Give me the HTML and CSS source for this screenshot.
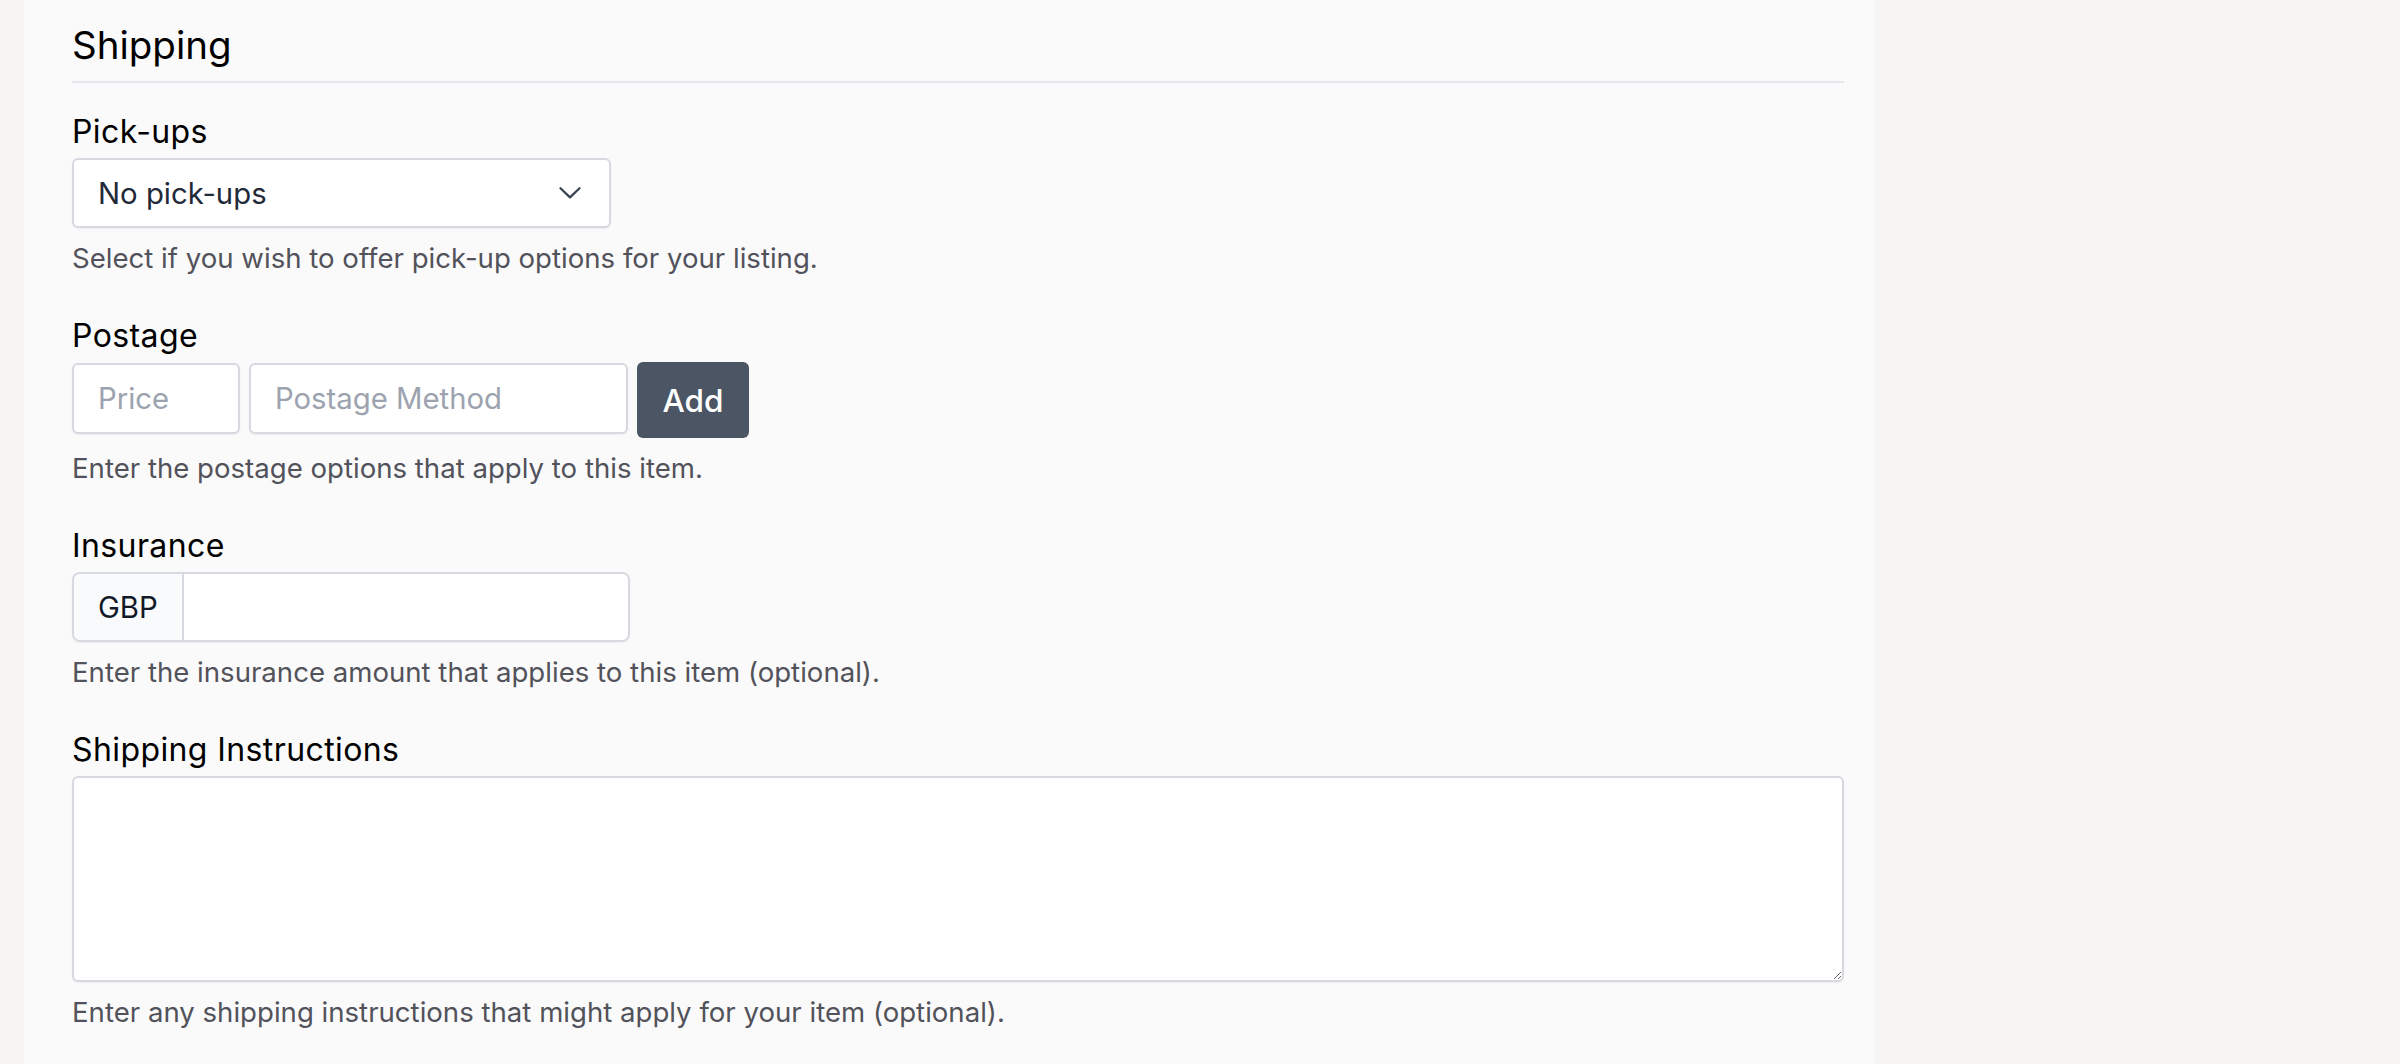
FILE: index.html
```html
<!DOCTYPE html>
<html lang="en">
<head>
<meta charset="utf-8">
<title>Shipping</title>
<link rel="stylesheet" href="styles.css">
</head>
<body>
<main class="page">
  <section class="panel">
    <h2 class="title">Shipping</h2>
    <div class="fields">
      <div class="field">
        <label class="label" for="pickups">Pick-ups</label>
        <div class="select-wrap">
          <select id="pickups" class="select">
            <option>No pick-ups</option>
          </select>
          <svg class="chevron" width="22" height="12" viewBox="0 0 22 12" aria-hidden="true"><path d="M1.5 1.2 L11 10.4 L20.5 1.2" fill="none" stroke="#374151" stroke-width="2.2" stroke-linecap="round" stroke-linejoin="round"/></svg>
        </div>
        <p class="help">Select if you wish to offer pick-up options for your listing.</p>
      </div>

      <div class="field">
        <label class="label" for="price">Postage</label>
        <div class="postage-row">
          <input id="price" class="input input-price" type="text" placeholder="Price">
          <input class="input input-method" type="text" placeholder="Postage Method">
          <button class="btn-add" type="button">Add</button>
        </div>
        <p class="help">Enter the postage options that apply to this item.</p>
      </div>

      <div class="field">
        <label class="label" for="insurance">Insurance</label>
        <div class="addon-group">
          <span class="addon">GBP</span>
          <input id="insurance" class="addon-input" type="text">
        </div>
        <p class="help">Enter the insurance amount that applies to this item (optional).</p>
      </div>

      <div class="field">
        <label class="label" for="instructions">Shipping Instructions</label>
        <textarea id="instructions" class="textarea"></textarea>
        <p class="help">Enter any shipping instructions that might apply for your item (optional).</p>
      </div>
    </div>
  </section>
</main>
</body>
</html>
```

FILE: styles.css
```css
* { box-sizing: border-box; }

html, body {
  margin: 0;
  padding: 0;
  background: #f6f5f3;
  font-family: Inter, "Noto Sans", "Liberation Sans", sans-serif;
  color: #000;
}

.page {
  display: flex;
  min-height: 1064px;
}

.panel {
  margin-left: 24px;
  width: 1851px;
  min-height: 1064px;
  background: #fafafa;
  padding: 0 31px 0 48px;
}

.title {
  margin: 0;
  padding: 21px 0 12px;
  font-size: 38.5px;
  line-height: 48px;
  font-weight: 400;
  color: #000;
  border-bottom: 2px solid #e6e7ec;
}

.fields {
  display: flex;
  flex-direction: column;
  gap: 39px;
  margin-top: 28px;
}

.field {
  display: flex;
  flex-direction: column;
  align-items: flex-start;
}

.label {
  display: block;
  font-size: 32px;
  letter-spacing: 0.4px;
  line-height: 42px;
  margin-bottom: 5px;
  color: #000;
}

.help {
  margin: 12px 0 0;
  font-size: 27.6px;
  line-height: 36px;
  color: #52525b;
}

.select-wrap {
  position: relative;
  width: 539px;
  height: 70px;
}

.select {
  -webkit-appearance: none;
  appearance: none;
  width: 100%;
  height: 100%;
  border: 2px solid #d6d9df;
  border-radius: 6px;
  background: #fff;
  padding: 0 60px 0 24px;
  font-family: inherit;
  font-size: 29.3px;
  color: #1f2937;
  box-shadow: 0 1px 2px rgba(0, 0, 0, 0.05);
  outline: none;
}

.chevron {
  position: absolute;
  right: 30px;
  top: 29px;
  pointer-events: none;
}

.postage-row {
  display: flex;
  gap: 9px;
  align-items: flex-start;
}

.input {
  height: 71px;
  margin-top: 1px;
  border: 2px solid #d6d9df;
  border-radius: 6px;
  background: #fff;
  padding: 0 24px;
  font-family: inherit;
  font-size: 29.3px;
  color: #1f2937;
  box-shadow: 0 1px 2px rgba(0, 0, 0, 0.05);
  outline: none;
}

.input::placeholder { color: #9ca3af; }

.input-price { width: 168px; }
.input-method { width: 379px; }

.btn-add {
  width: 112px;
  height: 76px;
  border: none;
  border-radius: 6px;
  background: #4b5563;
  color: #fff;
  font-family: inherit;
  font-size: 31.5px;
  font-weight: 500;
  padding: 0;
}

.addon-group {
  display: flex;
  width: 558px;
  height: 70px;
  border: 2px solid #d6d9df;
  border-radius: 8px;
  overflow: hidden;
  background: #fff;
  box-shadow: 0 1px 2px rgba(0, 0, 0, 0.05);
}

.addon {
  flex: none;
  display: flex;
  align-items: center;
  width: 110px;
  padding: 0 0 0 24px;
  background: #f9fafb;
  border-right: 2px solid #d6d9df;
  font-size: 29.3px;
  color: #111827;
}

.addon-input {
  flex: 1;
  min-width: 0;
  border: none;
  outline: none;
  background: #fff;
  font-family: inherit;
  font-size: 29.3px;
  padding: 0 24px;
}

.textarea {
  width: 100%;
  height: 206px;
  border: 2px solid #d6d9df;
  border-radius: 6px;
  background: #fff;
  box-shadow: 0 1px 2px rgba(0, 0, 0, 0.05);
  font-family: inherit;
  font-size: 29.3px;
  padding: 12px 24px;
  outline: none;
  resize: vertical;
}
```
